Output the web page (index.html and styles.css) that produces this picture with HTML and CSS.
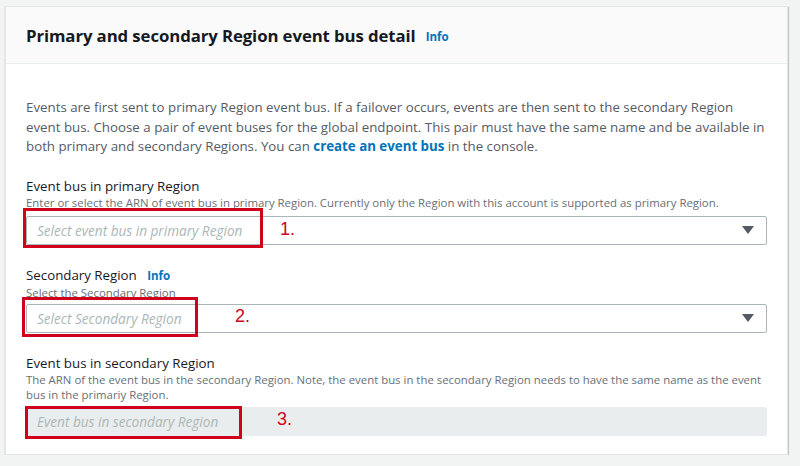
FILE: index.html
```html
<!DOCTYPE html>
<html>
<head>
<meta charset="utf-8">
<link rel="stylesheet" href="styles.css">
</head>
<body>
<div class="card">
  <div class="card-header">
    <h2 class="title">Primary and secondary Region event bus detail</h2>
    <span class="info">Info</span>
  </div>
  <div class="card-body">
    <p class="intro">Events are first sent to primary Region event bus. If a failover occurs, events are then sent to the secondary Region event bus. Choose a pair of event buses for the global endpoint. This pair must have the same name and be available in both primary and secondary Regions. You can <a class="link">create an event bus</a> in the console.</p>

    <div class="field f1">
      <div class="label">Event bus in primary Region</div>
      <div class="desc">Enter or select the ARN of event bus in primary Region. Currently only the Region with this account is supported as primary Region.</div>
      <div class="select">
        <span class="ph">Select event bus in primary Region</span>
        <span class="caret"></span>
        <span class="mark m1"></span>
        <span class="num n1">1.</span>
      </div>
    </div>

    <div class="field f2">
      <div class="label">Secondary Region <span class="info small">Info</span></div>
      <div class="desc">Select the Secondary Region</div>
      <div class="select">
        <span class="ph">Select Secondary Region</span>
        <span class="caret"></span>
        <span class="mark m2"></span>
        <span class="num n2">2.</span>
      </div>
    </div>

    <div class="field f3">
      <div class="label">Event bus in secondary Region</div>
      <div class="desc">The ARN of the event bus in the secondary Region. Note, the event bus in the secondary Region needs to have the same name as the event bus in the primariy Region.</div>
      <div class="select disabled">
        <span class="ph">Event bus in secondary Region</span>
        <span class="mark m3"></span>
        <span class="num n3">3.</span>
      </div>
    </div>
  </div>
</div>
</body>
</html>
```
FILE: styles.css
```css
html, body {
  margin: 0;
  padding: 0;
  background: #f2f3f3;
  font-family: "Open Sans", "Liberation Sans", sans-serif;
}
body {
  padding: 6px 12px 0 5px;
  width: 800px;
  box-sizing: border-box;
}
.card {
  background: #fff;
  border: 1px solid #e4e6e6;
  box-shadow: 0 1px 1px rgba(0,28,36,0.3), 1px 1px 1px rgba(0,28,36,0.15);
  height: 449px;
  box-sizing: border-box;
}
.card-header {
  background: #fafafa;
  border-bottom: 1px solid #eaeded;
  height: 57px;
  box-sizing: border-box;
  display: flex;
  align-items: center;
  padding: 0 20px;
}
.title {
  margin: 0;
  font-size: 16.8px;
  font-weight: 700;
  color: #16191f;
  letter-spacing: -0.1px;
}
.info {
  color: #0073bb;
  font-weight: 700;
  font-size: 11.5px;
  margin-left: 10px;
  margin-top: 3px;
}
.info.small {
  margin-left: 7px;
}
.card-body {
  padding: 0 20px;
}
.intro {
  margin: 34px 0 0;
  font-size: 13.3px;
  line-height: 19.5px;
  color: #545b64;
}
.link {
  color: #0073bb;
  font-weight: 700;
}
.field {
  margin-top: 20px;
}
.f2 { margin-top: 21px; }
.f3 { margin-top: 21px; }
.label {
  font-size: 13.3px;
  color: #16191f;
  line-height: 18px;
}
.desc {
  font-size: 11.4px;
  color: #687078;
  line-height: 15px;
  margin-bottom: 6px;
}
.f2 .desc { margin-bottom: 4px; }
.f3 .desc { margin-bottom: 5px; }
.select {
  position: relative;
  height: 29px;
  box-sizing: border-box;
  border: 1px solid #aab7b8;
  border-radius: 2px;
  display: flex;
  align-items: center;
  padding: 0 10px;
}
.select.disabled {
  background: #eaeded;
  border-color: #eaeded;
}
.ph {
  font-style: italic;
  font-size: 13.6px;
  color: #aab7b8;
}
.caret {
  margin-left: auto;
  width: 0;
  height: 0;
  border-left: 6px solid transparent;
  border-right: 6px solid transparent;
  border-top: 8px solid #545b64;
  margin-right: 2px;
}
.mark {
  position: absolute;
  border: 3px solid #d0021b;
  box-sizing: border-box;
}
.m1 { left: -4px; top: -9px; width: 240px; height: 40px; }
.m2 { left: -5px; top: -8px; width: 176px; height: 40px; }
.m3 { left: -2px; top: -2px; width: 217px; height: 33px; }
.num {
  position: absolute;
  color: #d0021b;
  font-size: 18px;
  font-family: "Liberation Sans", sans-serif;
}
.n1 { left: 253px; top: 2px; }
.n2 { left: 208px; top: 1px; }
.n3 { left: 250px; top: 1px; }
```
